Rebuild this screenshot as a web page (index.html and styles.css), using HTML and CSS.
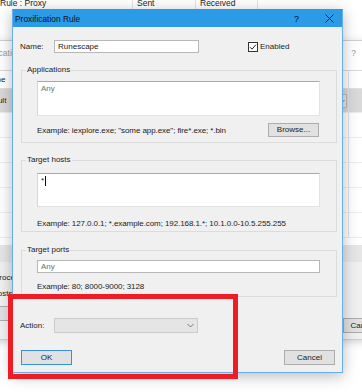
FILE: index.html
```html
<!DOCTYPE html>
<html>
<head>
<meta charset="utf-8">
<link rel="stylesheet" href="styles.css">
</head>
<body>
<div class="desk">
  <div class="main">
    <div class="colhead">
      <div class="ch c1">Rule : Proxy</div>
      <div class="ch c2">Sent</div>
      <div class="ch c3">Received</div>
      <div class="ch c4"></div>
    </div>
  </div>

  <div class="back">
    <div class="btitle"><span class="btext">Proxification Rules</span><span class="bhelp">?</span></div>
    <div class="blist">
      <div class="brow bhead"><span class="bc1">Name</span><span class="bc2"></span><span class="bc3"></span><span class="bc4"></span></div>
      <div class="brow bsel"><span class="bc1 bdef">Default</span><span class="bc2"></span><span class="bc3"><span class="bcombo"><svg width="5" height="4" viewBox="0 0 5 4"><path d="M0.5 1 L2.5 3 L4.5 1" fill="none" stroke="#555" stroke-width="0.8"/></svg></span></span><span class="bc4"></span></div>
      <div class="brow"><span class="bc1"></span><span class="bc2"></span><span class="bc3"></span><span class="bc4"></span></div>
      <div class="brow"><span class="bc1"></span><span class="bc2"></span><span class="bc3"></span><span class="bc4"></span></div>
      <div class="brow"><span class="bc1"></span><span class="bc2"></span><span class="bc3"></span><span class="bc4"></span></div>
      <div class="brow"><span class="bc1"></span><span class="bc2"></span><span class="bc3"></span><span class="bc4"></span></div>
      <div class="brow"><span class="bc1"></span><span class="bc2"></span><span class="bc3"></span><span class="bc4"></span></div>
    </div>
    <div class="bscroll"></div>
    <div class="bfoot">
      <div class="bnotes">
        <div class="bnote1">Process names</div>
        <div class="bnote2">Hosts</div>
        <div class="bbtn bbtn-l">Add...</div>
      </div>
      <div class="bbtn bbtn-r">Cancel</div>
    </div>
  </div>

  <div class="dlg">
    <div class="titlebar">
      <span class="ttext">Proxification Rule</span>
      <span class="tq">?</span>
      <span class="tx"><svg width="9" height="9" viewBox="0 0 9 9"><path d="M0.5 0.5 L8.5 8.5 M8.5 0.5 L0.5 8.5" stroke="#1a1a1a" stroke-width="0.9"/></svg></span>
    </div>
    <div class="body">
      <div class="namerow">
        <span class="lbl">Name:</span>
        <div class="input name">Runescape</div>
        <span class="chk"><svg width="10" height="10" viewBox="0 0 10 10"><rect x="0.5" y="0.5" width="9" height="9" fill="#fff" stroke="#333"/><path d="M2 5.2 L4 7.2 L8 2.6" fill="none" stroke="#222" stroke-width="1"/></svg></span>
        <span class="chklbl">Enabled</span>
      </div>

      <fieldset class="grp g1">
        <legend>Applications</legend>
        <div class="ta ta1"><span class="ph">Any</span></div>
        <div class="exrow">
          <span class="ex">Example: iexplore.exe; "some app.exe"; fire*.exe; *.bin</span>
          <span class="btn browse">Browse...</span>
        </div>
      </fieldset>

      <fieldset class="grp g2">
        <legend>Target hosts</legend>
        <div class="ta ta2"><span class="val">*</span><span class="caret"></span></div>
        <div class="exrow">
          <span class="ex">Example: 127.0.0.1; *.example.com; 192.168.1.*; 10.1.0.0-10.5.255.255</span>
        </div>
      </fieldset>

      <fieldset class="grp g3">
        <legend>Target ports</legend>
        <div class="input ports"><span class="ph">Any</span></div>
        <div class="exrow">
          <span class="ex">Example: 80; 8000-9000; 3128</span>
        </div>
      </fieldset>

      <div class="actrow">
        <span class="lbl">Action:</span>
        <div class="select"><svg width="7" height="5" viewBox="0 0 7 5"><path d="M0.5 1 L3.5 4 L6.5 1" fill="none" stroke="#707070" stroke-width="0.9"/></svg></div>
      </div>

      <div class="btnrow">
        <span class="btn ok">OK</span>
        <span class="btn cancel">Cancel</span>
      </div>
    </div>
  </div>

  <div class="mark"></div>
</div>
</body>
</html>
```

FILE: styles.css
```css
* { box-sizing: border-box; }
html, body { margin: 0; padding: 0; }
body {
  width: 362px;
  height: 392px;
  overflow: hidden;
  background: #ffffff;
  font-family: "Liberation Sans", Arial, sans-serif;
  font-size: 8px;
  color: #1b1b1b;
}
.desk {
  position: relative;
  width: 362px;
  height: 392px;
  overflow: hidden;
  background: #ffffff;
}

/* main window column header */
.main { height: 40px; }
.colhead {
  display: flex;
  height: 14px;
  margin-top: -4px;
  line-height: 14px;
  font-size: 8.5px;
  color: #222;
}
.ch { border-right: 1px solid #e3e3e3; white-space: nowrap; }
.c1 { width: 133px; padding-left: 0; }
.c2 { width: 63px; padding-left: 4px; }
.c3 { width: 62px; padding-left: 4px; }
.c4 { flex: 1; border-right: none; }

/* background dialog */
.back {
  position: absolute;
  left: -20px;
  top: 40px;
  width: 440px;
  height: 300px;
  background: #f0f0f0;
  border: 1px solid #cfcfcf;
  box-shadow: 0 2px 8px rgba(0,0,0,0.18);
  display: flex;
  flex-direction: column;
}
.btitle {
  height: 29px;
  background: #ffffff;
  display: flex;
  justify-content: space-between;
  padding: 6px 0 0 0;
  line-height: 12px;
  font-size: 8.5px;
  color: #9a9a9a;
}
.btext { margin-left: -6px; }
.bhelp { margin-right: 63px; }
.blist {
  height: 175px;
  background: #ffffff;
  border-top: 1px solid #d9d9d9;
  overflow: hidden;
}
.brow {
  display: flex;
  height: 25px;
  border-bottom: 1px solid #ececec;
  line-height: 24px;
}
.bhead { height: 18px; line-height: 17px; border-bottom: 1px solid #e0e0e0; }
.bsel { height: 24px; line-height: 23px; background: #d9d9d9; }
.bc1 { width: 120px; padding-left: 3px; }
.bdef { padding-left: 0; }
.bc2 { flex: 1; }
.bc3 { width: 100px; border-right: 1px solid #e2e2e2; display: flex; align-items: center; justify-content: flex-end; }
.bc4 { width: 70px; }
.bcombo {
  width: 90px;
  height: 14px;
  margin-right: 1px;
  background: #e8e8e8;
  border: 1px solid #b9b9b9;
  display: flex;
  align-items: center;
  justify-content: flex-end;
  padding-right: 1px;
}
.bscroll { height: 17px; background: #e6e6e6; }
.bfoot {
  flex: 1;
  display: flex;
  justify-content: space-between;
  padding: 10px 0 0 13px;
}
.bnotes { display: flex; flex-direction: column; }
.bnote1 { line-height: 12px; }
.bnote2 { line-height: 12px; margin-top: 4px; margin-left: -2px; }
.bbtn {
  height: 15px;
  background: #e1e1e1;
  border: 1px solid #adadad;
  line-height: 13px;
  text-align: center;
  width: 60px;
}
.bbtn-l { margin-top: 6px; margin-left: -41px; padding-right: 24px; }
.bbtn-r { margin-top: 46px; margin-right: 16px; padding-right: 20px; }

/* main dialog */
.dlg {
  position: absolute;
  left: 12px;
  top: 9px;
  width: 331px;
  height: 364px;
  background: #f0f0f0;
  border: 1px solid #68aee6;
  border-top-color: #2b9be8;
  box-shadow: 0 3px 14px rgba(0,0,0,0.28);
  display: flex;
  flex-direction: column;
}
.titlebar {
  height: 17px;
  background: #2b9be8;
  display: flex;
  align-items: center;
  padding-left: 2px;
  color: #111;
  font-size: 8.4px;
}
.ttext { flex: 1; }
.tq { font-size: 9px; margin-right: 26px; }
.tx { display: flex; margin-right: 8px; }

.body {
  flex: 1;
  display: flex;
  flex-direction: column;
  padding: 0 5px 7px 7px;
}
.lbl { width: 34px; }
.namerow {
  display: flex;
  align-items: center;
  height: 13px;
  margin-top: 13px;
}
.input {
  height: 13px;
  background: #ffffff;
  border: 1px solid #b7b7b7;
  line-height: 11px;
  padding-left: 3px;
}
.name { width: 145px; }
.chk { display: flex; margin-left: 49px; }
.chklbl { margin-left: 2px; }

.grp {
  margin: 12px 0 0 1px;
  border: 1px solid #dcdcdc;
  padding: 6px 16px 5px 15px;
  min-width: 0;
}
.grp legend {
  padding: 0 1px;
  margin-left: -11px;
  line-height: 10px;
  font-size: 8px;
}
.ta {
  background: #ffffff;
  border: 1px solid #e3e3e3;
  border-top-color: #a9a9a9;
  border-left-color: #d6d6d6;
  padding: 2px 3px;
  line-height: 10px;
}
.ta1 { height: 35px; }
.ph { color: #6e6e6e; }
.exrow {
  display: flex;
  justify-content: space-between;
  align-items: center;
  height: 14px;
  margin-top: 7px;
  white-space: nowrap;
}
.ex { letter-spacing: -0.08px; }
.btn {
  display: block;
  background: #e1e1e1;
  border: 1px solid #adadad;
  text-align: center;
  width: 51px;
}
.browse { height: 14px; line-height: 12px; margin-right: 1px; }

.g2 { margin-top: 12px; padding-top: 8px; padding-bottom: 1px; }
.ta2 { height: 34px; display: flex; align-items: flex-start; }
.val { color: #222; }
.caret { width: 1px; height: 10px; background: #111; margin-left: 1px; }
.g2 .exrow { margin-top: 9px; }

.g3 { margin-top: 13px; padding-top: 5px; padding-bottom: 3px; }
.ports { width: 100%; }
.g3 .exrow { margin-top: 6px; }

.actrow {
  display: flex;
  align-items: center;
  margin-top: 21px;
  height: 15px;
}
.select {
  width: 144px;
  height: 15px;
  background: #e5e5e5;
  border: 1px solid #cbcbcb;
  display: flex;
  align-items: center;
  justify-content: flex-end;
  padding-right: 3px;
}

.btnrow {
  display: flex;
  justify-content: space-between;
  margin-top: 17px;
}
.btn.ok, .btn.cancel { height: 15px; line-height: 13px; }
.ok { margin-left: 1px; border-color: #3a8ee0; }
.cancel { margin-right: 2px; }

/* annotation */
.mark {
  position: absolute;
  left: 8px;
  top: 294px;
  width: 230px;
  height: 85px;
  border: 5px solid #ee1c24;
}
```
